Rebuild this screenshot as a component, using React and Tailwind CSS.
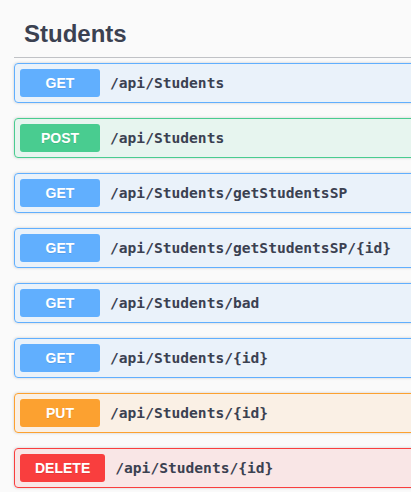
import React from 'react';

const METHOD_STYLES = {
  GET: { row: 'border-[#61affe] bg-[#61affe]/10', badge: 'bg-[#61affe]' },
  POST: { row: 'border-[#49cc90] bg-[#49cc90]/10', badge: 'bg-[#49cc90]' },
  PUT: { row: 'border-[#fca130] bg-[#fca130]/10', badge: 'bg-[#fca130]' },
  DELETE: { row: 'border-[#f93e3e] bg-[#f93e3e]/10', badge: 'bg-[#f93e3e]' },
};

const endpoints = [
  { method: 'GET', path: '/api/Students' },
  { method: 'POST', path: '/api/Students' },
  { method: 'GET', path: '/api/Students/getStudentsSP' },
  { method: 'GET', path: '/api/Students/getStudentsSP/{id}' },
  { method: 'GET', path: '/api/Students/bad' },
  { method: 'GET', path: '/api/Students/{id}' },
  { method: 'PUT', path: '/api/Students/{id}' },
  { method: 'DELETE', path: '/api/Students/{id}' },
];

function Operation({ method, path }) {
  const s = METHOD_STYLES[method];
  return (
    <div
      className={`mb-[15px] flex items-center rounded-[4px] border p-[5px] shadow-[0_0_3px_rgba(0,0,0,0.19)] ${s.row}`}
    >
      <span
        className={`min-w-[80px] rounded-[3px] px-[15px] py-[6px] text-center text-[14px] leading-[16px] font-bold text-white [text-shadow:0_1px_0_rgba(0,0,0,0.1)] ${s.badge}`}
        style={{ fontFamily: '"Liberation Sans", Arial, sans-serif' }}
      >
        {method}
      </span>
      <span
        className="px-[10px] text-[14.6px] font-bold text-[#3b4151]"
        style={{ fontFamily: '"DejaVu Sans Mono", "Liberation Mono", monospace' }}
      >
        {path}
      </span>
    </div>
  );
}

export default function App() {
  return (
    <div className="min-h-screen w-full overflow-hidden bg-[#fafafa]">
      <div className="w-[620px] pt-[10px] pl-[14px]">
        <h3
          className="mb-[5px] border-b border-[#3b4151]/30 py-[10px] pl-[10px] text-[24px] leading-[27px] font-bold text-[#3b4151]"
          style={{ fontFamily: '"Liberation Sans", Arial, sans-serif' }}
        >
          Students
        </h3>
        {endpoints.map((ep, i) => (
          <Operation key={i} {...ep} />
        ))}
      </div>
    </div>
  );
}
